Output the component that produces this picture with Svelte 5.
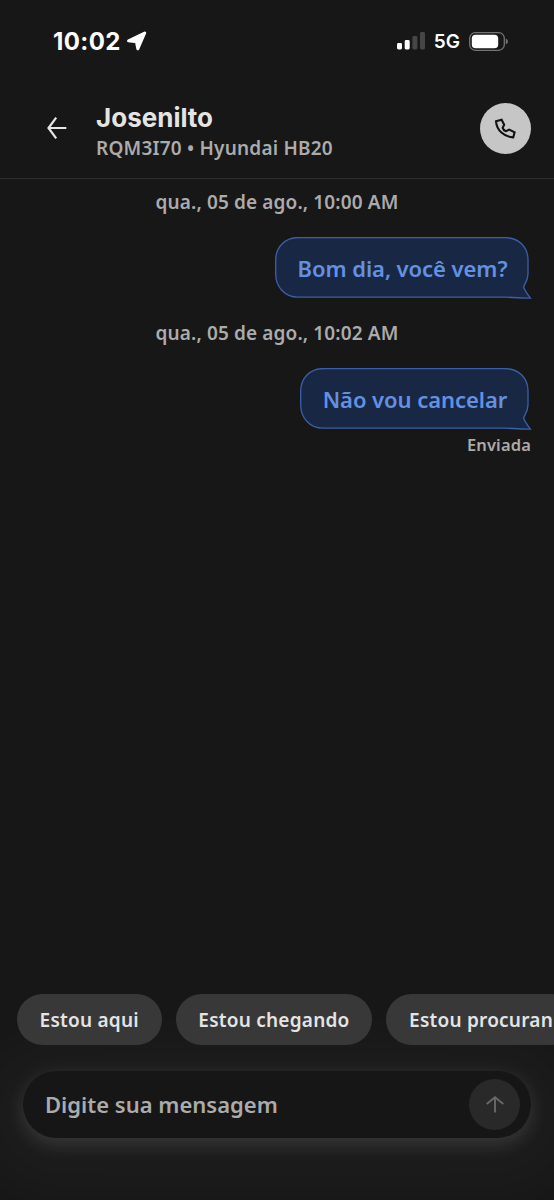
<script lang="ts">
  interface Message {
    date: string;
    text: string;
    width: number;
    status?: string;
  }

  const messages: Message[] = [
    { date: "qua., 05 de ago., 10:00 AM", text: "Bom dia, você vem?", width: 253 },
    { date: "qua., 05 de ago., 10:02 AM", text: "Não vou cancelar", width: 228, status: "Enviada" },
  ];

  const replies = ["Estou aqui", "Estou chegando", "Estou procuran"];

  // rounded bubble with a small tail in the lower right corner
  function bubblePath(w: number): string {
    return `M23 .6H${w - 23}C${w - 9} .6 ${w} 10 ${w} 23V37
      C${w} 43 ${w - 3} 46 ${w - 4.4} 50C${w - 3} 54 ${w} 58 ${w + 2.4} 61.2
      C${w - 6} 61.2 ${w - 14} 60.2 ${w - 24} 60.2H23C10 60.2 .7 50 .7 37V23C.7 10 10 .6 23 .6Z`;
  }
</script>

<div class="screen">
  <div class="status-bar">
    <div class="clock">
      <span class="time">10:02</span>
      <svg width="20" height="20" viewBox="0 0 20 20">
        <path d="M1.6 9.8 17.7 2 10.8 17.8 9.4 10.8Z" fill="#fff" stroke="#fff" stroke-width="3" stroke-linejoin="round" />
      </svg>
    </div>
    <div class="signal">
      <svg width="28" height="18" viewBox="0 0 28 18">
        <rect x="0" y="11" width="5" height="6.5" rx="1.4" fill="#fff" />
        <rect x="7.7" y="8" width="5" height="9.5" rx="1.4" fill="#fff" />
        <rect x="15.4" y="4" width="5" height="13.5" rx="1.4" fill="#464646" />
        <rect x="23" y="0" width="5" height="17.5" rx="1.4" fill="#464646" />
      </svg>
      <span class="network">5G</span>
      <svg width="39" height="19" viewBox="0 0 39 19">
        <rect x=".7" y=".7" width="34.6" height="17.6" rx="5.6" fill="none" stroke="#747474" stroke-width="1.3" />
        <rect x="2.8" y="2.8" width="26.4" height="13.4" rx="3.8" fill="#fff" />
        <path d="M36.8 6.5q2.2 1 2.2 3t-2.2 3Z" fill="#747474" />
      </svg>
    </div>
  </div>

  <header>
    <button class="back" aria-label="Voltar">
      <svg width="20" height="22" viewBox="0 0 20 22" fill="none" stroke="#e6e6e6" stroke-width="2.2">
        <path d="M19.3 11H1.5M9.2.7 1.5 11l7.7 10.3" />
      </svg>
    </button>
    <div class="driver">
      <h1>Josenilto</h1>
      <p>RQM3I70 • Hyundai HB20</p>
    </div>
    <button class="call" aria-label="Ligar">
      <svg width="51" height="51" viewBox="0 0 51 51" fill="none" stroke="#111" stroke-width="2.1">
        <path d="M16 18.2 21.6 16.7 24.2 21.8 22.6 24.8C23 26.4 24.2 27.6 26 28.2L29.2 26.6 34.6 29.2 33.2 34.4C24.2 34 16.6 27.3 16 18.2Z" />
      </svg>
    </button>
  </header>

  <main>
    {#each messages as m}
      <div class="date">{m.date}</div>
      <div class="bubble" style="width: {m.width}px">
        <svg width={m.width + 4} height="63">
          <path d={bubblePath(m.width)} />
        </svg>
        <span>{m.text}</span>
      </div>
      {#if m.status}
        <div class="sent">{m.status}</div>
      {/if}
    {/each}
  </main>

  <footer>
    <div class="replies">
      {#each replies as reply}
        <button class="chip">{reply}</button>
      {/each}
    </div>
    <div class="composer">
      <span class="placeholder">Digite sua mensagem</span>
      <button class="send" aria-label="Enviar">
        <svg width="18" height="17" viewBox="0 0 18 17" fill="none" stroke="#686868" stroke-width="1.9">
          <path d="M9 16.5V1.2M.7 8 9 1.2 17.3 8" />
        </svg>
      </button>
    </div>
  </footer>
</div>

<style>
  :global(body) {
    background: #171717;
  }

  .screen {
    display: flex;
    flex-direction: column;
    width: 554px;
    height: 1200px;
    overflow: hidden;
    background: #171717;
    color: #ababab;
    font-family: "Noto Sans", sans-serif;
    font-weight: 600;
    white-space: nowrap;
  }

  button {
    display: flex;
    flex: none;
    align-items: center;
    justify-content: center;
    padding: 0;
    border: 0;
    background: none;
    color: inherit;
    font: inherit;
  }

  svg {
    display: block;
    flex: none;
  }

  .status-bar {
    display: flex;
    align-items: center;
    justify-content: space-between;
    height: 82px;
    padding: 0 46px 0 53px;
    box-sizing: border-box;
    color: #fff;
    font-family: Inter, sans-serif;
  }

  .clock,
  .signal {
    display: flex;
    align-items: center;
  }

  .clock { gap: 6px; }
  .signal { gap: 9px; }

  .time {
    font-size: 24px;
    font-weight: 700;
    letter-spacing: 0.4px;
  }

  .network { font-size: 19px; }

  header {
    display: flex;
    align-items: center;
    height: 97px;
    padding: 0 23px 4px 47px;
    box-sizing: border-box;
    border-bottom: 1px solid #2e2e2e;
  }

  .driver {
    flex: 1;
    margin-left: 29px;
    padding-top: 6px;
  }

  h1 {
    margin: 0;
    color: #e4e4e4;
    font: 650 26px/33px Inter, sans-serif;
  }

  p {
    margin: 0;
    font-size: 19px;
    letter-spacing: 0.2px;
    line-height: 28px;
  }

  .call {
    width: 51px;
    height: 51px;
    border-radius: 50%;
    background: #c6c6c6;
  }

  main {
    display: flex;
    flex: 1;
    flex-direction: column;
    align-items: flex-end;
    padding: 9px 26px 0 0;
  }

  .date {
    align-self: center;
    height: 28px;
    margin-left: 26px;
    font-size: 19px;
    letter-spacing: 0.13px;
    line-height: 28px;
  }

  .bubble {
    position: relative;
    display: flex;
    align-items: center;
    justify-content: center;
    height: 61px;
    margin: 21px 0;
    padding: 1px 0 0 2px;
    box-sizing: border-box;
    color: #6490e2;
    font-size: 22px;
    letter-spacing: -0.06px;
  }

  .bubble svg {
    position: absolute;
    top: 0;
    left: 0;
    fill: #182844;
    stroke: #3c5fa8;
    stroke-width: 1.3;
  }

  .bubble span {
    position: relative;
  }

  .sent {
    margin: -18px -3px 0 0;
    font-size: 16.5px;
    letter-spacing: 0.15px;
    line-height: 26px;
  }

  .replies {
    position: relative;
    z-index: 1;
    display: flex;
    gap: 14px;
    padding-left: 17px;
  }

  .chip {
    height: 51px;
    padding: 0 22.9px 0 22.6px;
    border-radius: 26px;
    background: #383838;
    color: #e4e4e4;
    font-size: 19px;
    letter-spacing: 0.23px;
  }

  .composer {
    display: flex;
    align-items: center;
    justify-content: space-between;
    height: 67px;
    margin: 26px 23px 62px;
    padding: 0 11px 0 22px;
    box-sizing: border-box;
    border-radius: 34px;
    background: #161616;
    box-shadow: 0 6px 20px rgba(255, 255, 255, 0.14), 0 10px 50px 50px rgba(255, 255, 255, 0.022);
    font-size: 22px;
  }

  .placeholder { padding-bottom: 2px; }

  .send {
    width: 51px;
    height: 51px;
    border-radius: 50%;
    background: #292929;
  }
</style>
